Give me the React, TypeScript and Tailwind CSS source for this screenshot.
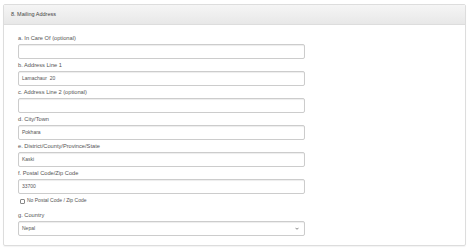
import React from "react";

const fields = [
  { label: "a. In Care Of (optional)", value: "" },
  { label: "b. Address Line 1", value: "Lamachaur  20" },
  { label: "c. Address Line 2 (optional)", value: "" },
  { label: "d. City/Town", value: "Pokhara" },
  { label: "e. District/County/Province/State", value: "Kaski" },
  { label: "f. Postal Code/Zip Code", value: "33700" },
];

const App = () => {
  return (
    <div
      className="w-[474px] h-[251px] bg-white pt-[4px] pl-[3px]"
      style={{ fontFamily: '"Liberation Sans", Arial, sans-serif' }}
    >
      {/* Panel */}
      <div className="w-[463px] border border-[#dddddd] rounded-[2px] shadow-[0_1px_1px_rgba(0,0,0,0.05)]">
        {/* Heading */}
        <div className="h-[20px] flex items-center pl-[7px] bg-gradient-to-b from-[#f5f5f5] to-[#e8e8e8] border-b border-[#dddddd] text-[5.5px] text-[#444]">
          8. Mailing Address
        </div>

        {/* Body */}
        <div className="pl-[14px] pt-[9px] pb-[9px]">
          {fields.map((f, i) => (
            <div key={i} className={i === fields.length - 1 ? "" : "mb-[2px]"}>
              <div className="h-[8px] leading-[8px] mb-[2px] text-[5.7px] text-[#555]">
                {f.label}
              </div>
              <div className="w-[287px] h-[15px] border border-[#cccccc] rounded-[2px] bg-white shadow-[inset_0_1px_1px_rgba(0,0,0,0.075)] flex items-center pl-[3px] text-[5px] text-[#555] whitespace-pre">
                {f.value}
              </div>
            </div>
          ))}

          {/* Checkbox */}
          <div className="mt-[3px] h-[8px] flex items-center pl-[2px] gap-[2px] text-[5px] text-[#555]">
            <span className="w-[5px] h-[5px] border border-[#888] rounded-[1px] bg-white" />
            <span>No Postal Code / Zip Code</span>
          </div>

          {/* Country */}
          <div className="mt-[6px]">
            <div className="h-[8px] leading-[8px] mb-[2px] text-[5.7px] text-[#555]">
              g. Country
            </div>
            <div className="w-[287px] h-[15px] border border-[#cccccc] rounded-[2px] bg-white shadow-[inset_0_1px_1px_rgba(0,0,0,0.075)] flex items-center justify-between pl-[3px] pr-[5px] text-[5px] text-[#555]">
              <span>Nepal</span>
              <svg width="4" height="3" viewBox="0 0 4 3">
                <path d="M0.5 0.8 L2 2.3 L3.5 0.8" fill="none" stroke="#777" strokeWidth="0.9" />
              </svg>
            </div>
          </div>
        </div>
      </div>
    </div>
  );
};

export default App;
